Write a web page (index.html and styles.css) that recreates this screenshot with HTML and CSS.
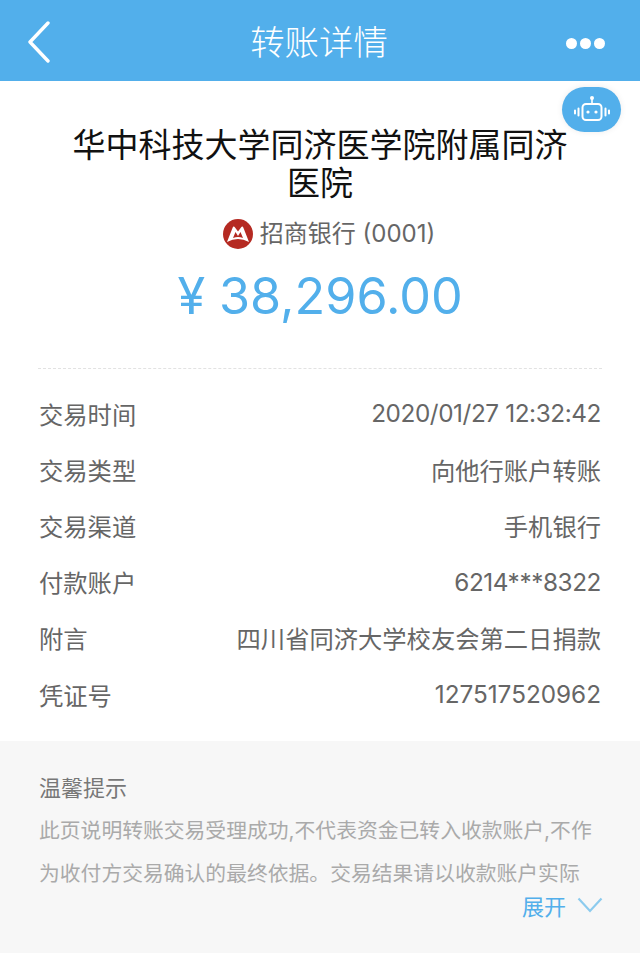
FILE: index.html
```html
<!DOCTYPE html>
<html lang="zh-CN">
<head>
    <meta charset="UTF-8">
    <title>转账详情</title>
    <link rel="stylesheet" href="styles.css">
</head>
<body>
    <div class="navbar">
        <svg class="back-icon" width="24" height="42" viewBox="0 0 24 42"><path d="M21 2 L3 21 L21 40" fill="none" stroke="#fff" stroke-width="3.4" stroke-linecap="round" stroke-linejoin="round"/></svg>
        <h1>转账详情</h1>
        <div class="more"><span></span><span></span><span></span></div>
    </div>
    <div class="robot">
        <svg width="40" height="30" viewBox="0 0 40 30">
            <circle cx="20" cy="3" r="2" fill="#fff"/>
            <path d="M20 4 V9" stroke="#fff" stroke-width="1.6"/>
            <rect x="10.5" y="9" width="19" height="16" rx="3.5" fill="none" stroke="#fff" stroke-width="2"/>
            <circle cx="16" cy="17" r="1.6" fill="#fff"/>
            <circle cx="24" cy="17" r="1.6" fill="#fff"/>
            <path d="M6.500 13.500 V20.500 M3 15.500 V18.500 M33.500 13.500 V20.500 M37 15.500 V18.500" stroke="#fff" stroke-width="2" stroke-linecap="round"/>
        </svg>
    </div>
    <div class="summary">
        <h2>华中科技大学同济医学院附属同济医院</h2>
        <div class="bank">
            <svg class="bank-logo" width="30" height="30" viewBox="0 0 30 30">
                <circle cx="15" cy="15" r="15" fill="#b52a22"/>
                <path d="M4 23 L9.500 9 Q10.500 6.500 12 8.500 L15 12.500 L18 8.500 Q19.500 6.500 20.500 9 L26 23 Q15 17 4 23 Z" fill="#fff"/>
                <path d="M10 19 L12.500 13 L15 17 L17.500 13 L20 19 Q15 17 10 19 Z" fill="#b52a22"/>
            </svg>
            <span>招商银行 (0001)</span>
        </div>
        <div class="amount"><span class="yen">¥</span>38,296.00</div>
    </div>
    <div class="details">
        <div class="row"><span>交易时间</span><span class="num">2020/01/27 12:32:42</span></div>
        <div class="row"><span>交易类型</span><span>向他行账户转账</span></div>
        <div class="row"><span>交易渠道</span><span>手机银行</span></div>
        <div class="row"><span>付款账户</span><span class="num">6214***8322</span></div>
        <div class="row"><span>附言</span><span>四川省同济大学校友会第二日捐款</span></div>
        <div class="row"><span>凭证号</span><span>127517520962</span></div>
    </div>
    <div class="tips">
        <h3>温馨提示</h3>
        <p>此页说明转账交易受理成功,不代表资金已转入收款账户,不作为收付方交易确认的最终依据。交易结果请以收款账户实际</p>
        <div class="expand">展开
            <svg width="26" height="16" viewBox="0 0 26 16"><path d="M1.500 1.500 L13 14 L24.500 1.500" fill="none" stroke="#8ccbee" stroke-width="2.200"/></svg>
        </div>
    </div>
</body>
</html>
```

FILE: styles.css
```css
* {
    box-sizing: border-box;
}
html, body {
    margin: 0;
    padding: 0;
}
body {
    width: 640px;
    height: 953px;
    overflow: hidden;
    position: relative;
    background-color: #fff;
    font-family: Inter, "Noto Sans CJK SC", sans-serif;
    color: #666;
}
.navbar {
    height: 81px;
    background-color: #52afeb;
    display: flex;
    align-items: center;
    justify-content: space-between;
    padding: 0 35px 0 27px;
}
.back-icon {
    margin-top: 3px;
}
.navbar h1 {
    margin: 0 0 2px 21px;
    font-size: 34.400px;
    font-weight: 300;
    color: #fff;
}
.more {
    display: flex;
    gap: 3px;
    margin-top: 5px;
}
.more span {
    width: 11px;
    height: 11px;
    border-radius: 50%;
    background-color: #fff;
}
.robot {
    position: absolute;
    top: 87px;
    left: 562px;
    width: 59px;
    height: 45px;
    border-radius: 23px;
    background-color: #52afeb;
    box-shadow: 0 0 6px rgba(0, 0, 0, 0.08);
    display: flex;
    align-items: center;
    justify-content: center;
}
.summary {
    margin: 0 38px;
    padding: 45px 0 41px;
    border-bottom: 1px dashed #e2e2e2;
    text-align: center;
}
.summary h2 {
    margin: 0 34px;
    font-size: 33px;
    font-weight: 400;
    line-height: 38px;
    color: #111;
}
.bank {
    margin-top: 16px;
    padding-left: 18px;
    display: flex;
    align-items: center;
    justify-content: center;
    gap: 7px;
    font-size: 24px;
    line-height: 32px;
}
.amount {
    margin-top: 15px;
    font-size: 50.300px;
    font-weight: 400;
    line-height: 62px;
    color: #52afeb;
}
.yen {
    margin-right: 14px;
}
.details {
    padding: 16px 39px 19px;
}
.row {
    height: 56.200px;
    display: flex;
    align-items: center;
    justify-content: space-between;
    font-size: 24.300px;
}
.num {
    letter-spacing: -0.400px;
}
.tips {
    height: 212px;
    padding: 32px 39px 0;
    background-color: #f7f7f7;
    position: relative;
}
.tips h3 {
    margin: 0;
    font-size: 22px;
    font-weight: 400;
    line-height: 30px;
    color: #777;
}
.tips p {
    margin: 6px 0 0;
    font-size: 20.800px;
    line-height: 43px;
    color: #aaa;
}
.expand {
    position: absolute;
    right: 37px;
    top: 148px;
    display: flex;
    align-items: center;
    gap: 11px;
    font-size: 22px;
    color: #52afeb;
}
```
